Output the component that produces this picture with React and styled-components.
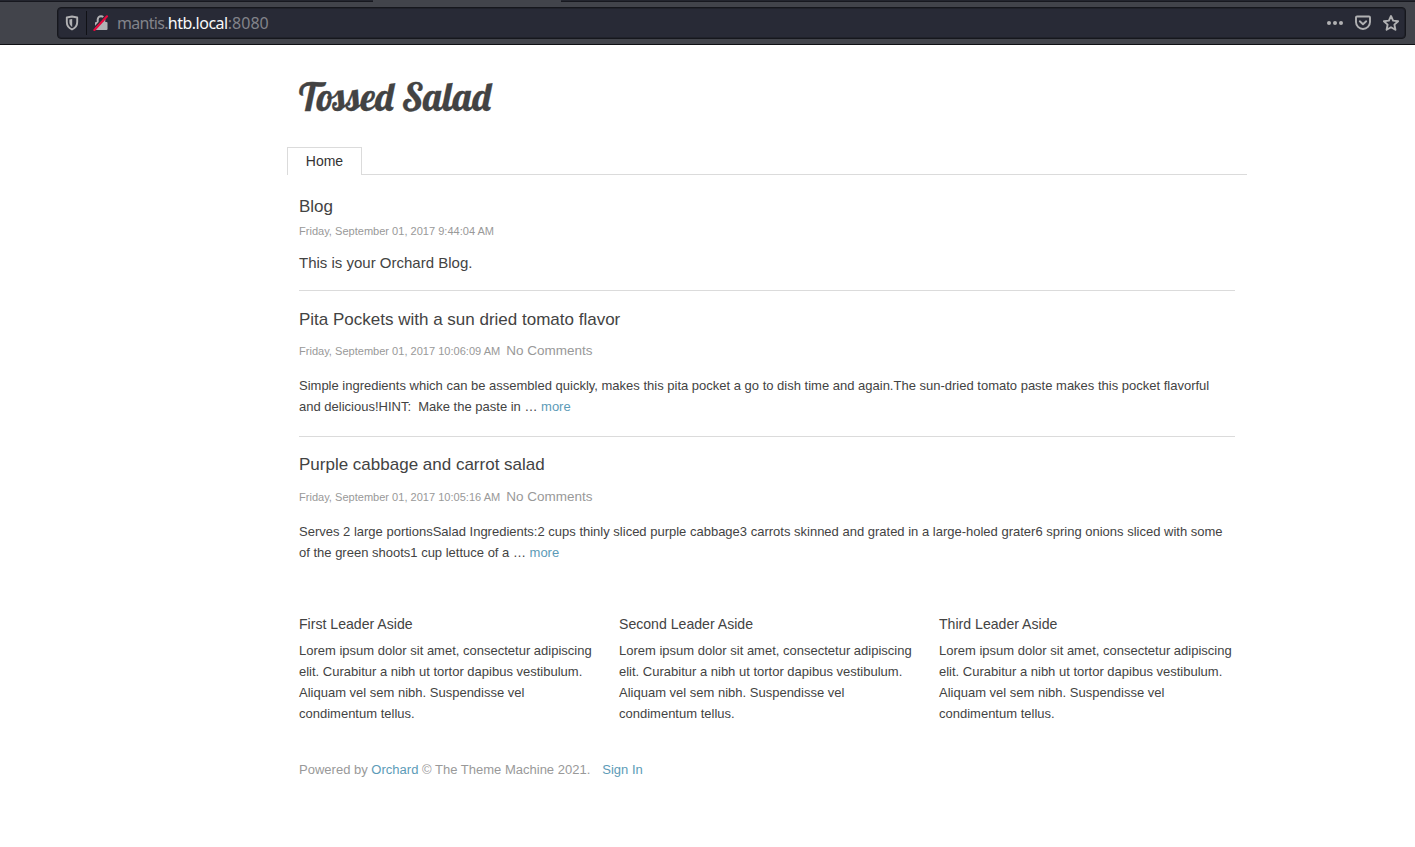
import React from "react";
import styled, { createGlobalStyle } from "styled-components";

const GlobalStyle = createGlobalStyle`
  body {
    margin: 0;
    background: #fff;
    color: #434343;
    font: 13px/21px "Liberation Sans", Arial, sans-serif;
  }
  * { box-sizing: border-box; }
  h1, h2, h3, p { margin: 0; font-weight: normal; }
  a { color: #5c9bb7; text-decoration: none; }
`;

const Chrome = styled.header`
  height: 45px;
  display: flex;
  flex-direction: column;
  background: #42444b;
  border-bottom: 1px solid #0f1014;
`;

const TabStrip = styled.div`
  height: 2px;
  display: flex;
  justify-content: space-between;
`;

const InactiveTabs = styled.div`
  width: ${(p) => p.$width}px;
  background: #23252e;
  border-bottom: 1px solid #17181f;
`;

const AddressBar = styled.div`
  height: 32px;
  margin: 5px 9px 0 57px;
  padding: 0 6px 0 7px;
  display: flex;
  align-items: center;
  background: #282a36;
  border: 1px solid #16171d;
  border-radius: 4px;
  box-shadow: inset 0 0 0 1px #20222b;
  color: #b1b1b3;
  svg { display: block; flex: none; }
`;

const Divider = styled.span`
  width: 1px;
  height: 24px;
  margin: 0 6px 0 7px;
  background: #101116;
`;

const Url = styled.span`
  flex: 1;
  margin-left: 8px;
  font: 16px/22px "Noto Sans", sans-serif;
  letter-spacing: -0.7px;
  color: #82838a;
  b { font-weight: normal; letter-spacing: -0.5px; color: #f9f9fa; }
`;

const Port = styled.span`
  letter-spacing: 0.05px;
`;

const Actions = styled.div`
  display: flex;
  gap: 12px;
`;

const Page = styled.main`
  width: 960px;
  margin-left: 287px;
`;

const SiteTitle = styled.h1`
  margin: 27px 0 0 12px;
  font: normal 39px/50px "Lobster", "Liberation Serif", serif;
  -webkit-text-stroke: 0.3px #434343;
  color: #434343;
  transform: scaleX(0.966);
  transform-origin: left;
`;

const Nav = styled.nav`
  display: flex;
  margin-top: 25px;
  height: 28px;
`;

const NavTab = styled.span`
  width: 75px;
  border: 1px solid #dbdbdb;
  border-bottom: 0;
  text-align: center;
  font-size: 14px;
  line-height: 27px;
  color: #333;
`;

const NavRule = styled.span`
  flex: 1;
  border-bottom: 1px solid #dbdbdb;
`;

const Content = styled.div`
  padding: 0 12px;
`;

const BlogIntro = styled.section`
  padding: 20px 0 16px;
  border-bottom: 1px solid #dbdbdb;
`;

const Heading = styled.h2`
  font-size: 17px;
  line-height: 24px;
`;

const Stamp = styled.span`
  font-size: 11.05px;
  color: #999;
`;

const IntroStamp = styled.p`
  margin-top: 2px;
  line-height: 20px;
`;

const IntroText = styled.p`
  margin-top: 11px;
  font-size: 15px;
  line-height: 22px;
`;

const Post = styled.article`
  height: 146px;
  padding-top: ${(p) => (p.$last ? 16 : 17)}px;
  border-bottom: ${(p) => (p.$last ? "0" : "1px solid #dbdbdb")};
`;

const PostMeta = styled.div`
  display: flex;
  align-items: baseline;
  gap: 6px;
  margin: ${(p) => (p.$last ? 9 : 8)}px 0 13px;
  line-height: 22px;
  color: #999;
`;

const CommentCount = styled.span`
  font-size: 13.5px;
`;

const Asides = styled.div`
  display: grid;
  grid-template-columns: repeat(3, 296px);
  column-gap: 24px;
  margin-top: 30px;
`;

const AsideTitle = styled.h3`
  font-size: 14.1px;
  line-height: 22px;
  margin-bottom: 5px;
`;

const Footer = styled.footer`
  display: flex;
  gap: 12px;
  margin-top: 35px;
  font-size: 13.03px;
  color: #999;
`;

const posts = [
  {
    title: "Pita Pockets with a sun dried tomato flavor",
    date: "Friday, September 01, 2017 10:06:09 AM",
    lines: [
      "Simple ingredients which can be assembled quickly, makes this pita pocket a go to dish time and again.The sun-dried tomato paste makes this pocket flavorful",
      "and delicious!HINT: \u00a0Make the paste in … ",
    ],
  },
  {
    title: "Purple cabbage and carrot salad",
    date: "Friday, September 01, 2017 10:05:16 AM",
    lines: [
      "Serves 2 large portionsSalad Ingredients:2 cups thinly sliced purple cabbage3 carrots skinned and grated in a large-holed grater6 spring onions sliced with some",
      "of the green shoots1 cup lettuce of a … ",
    ],
  },
];

const ShieldIcon = () => (
  <svg width="14" height="16" viewBox="0 0 14 16" fill="none">
    <path d="M7 1.500 12.200 2.500V7c0 3.200-1.800 5.900-5.200 7.500C3.600 12.900 1.800 10.200 1.800 7V2.500Z" stroke="currentColor" strokeWidth="1.9" strokeLinejoin="round" />
    <path d="M7.200 4v8C5.300 10.700 4.400 9 4.400 7V4.600Z" fill="currentColor" />
  </svg>
);

const InsecureIcon = () => (
  <svg width="16" height="16" viewBox="0 0 16 16" fill="none">
    <path d="M4.700 8V4.500a3.300 3.300 0 0 1 6.600 0v3" stroke="currentColor" strokeWidth="2" />
    <rect x="2" y="7" width="12.500" height="8" rx="1" fill="currentColor" />
    <path d="M0 14.300 13.200 .1" stroke="#282a36" strokeWidth="1.600" />
    <path d="M1.400 14.900 14 1.300" stroke="#e6083c" strokeWidth="2.200" strokeLinecap="round" />
  </svg>
);

const MoreIcon = () => (
  <svg width="16" height="16" viewBox="0 0 16 16" fill="currentColor">
    <circle cx="2" cy="8" r="2" />
    <circle cx="8" cy="8" r="2" />
    <circle cx="14" cy="8" r="2" />
  </svg>
);

const PocketIcon = () => (
  <svg width="16" height="16" viewBox="0 0 16 16" fill="none" stroke="currentColor" strokeWidth="1.9" strokeLinecap="round" strokeLinejoin="round">
    <path d="M2 1.500h12a1 1 0 0 1 1 1V7A7 7 0 0 1 1 7V2.500a1 1 0 0 1 1-1Z" />
    <path d="m4.800 6.300 3.200 3 3.200-3" />
  </svg>
);

const StarIcon = () => (
  <svg width="16" height="16" viewBox="0 0 16 16" fill="none" stroke="currentColor" strokeWidth="1.9" strokeLinejoin="round">
    <path d="m8 1 2.100 4.600 5 .6-3.700 3.400 1 5.200L8 12.200l-4.400 2.600 1-5.200L.9 6.200l5-.6Z" />
  </svg>
);

export default function App() {
  return (
    <>
      <GlobalStyle />
      <Chrome>
        <TabStrip>
          <InactiveTabs $width={373} />
          <InactiveTabs $width={854} />
        </TabStrip>
        <AddressBar>
          <ShieldIcon />
          <Divider />
          <InsecureIcon />
          <Url>mantis.<b>htb.local</b><Port>:8080</Port></Url>
          <Actions>
            <MoreIcon />
            <PocketIcon />
            <StarIcon />
          </Actions>
        </AddressBar>
      </Chrome>
      <Page>
        <SiteTitle>Tossed Salad</SiteTitle>
        <Nav>
          <NavTab>Home</NavTab>
          <NavRule />
        </Nav>
        <Content>
          <BlogIntro>
            <Heading>Blog</Heading>
            <IntroStamp><Stamp>Friday, September 01, 2017 9:44:04 AM</Stamp></IntroStamp>
            <IntroText>This is your Orchard Blog.</IntroText>
          </BlogIntro>
          {posts.map((post, i) => (
            <Post key={post.title} $last={i === 1}>
              <Heading>{post.title}</Heading>
              <PostMeta $last={i === 1}>
                <Stamp>{post.date}</Stamp>
                <CommentCount>No Comments</CommentCount>
              </PostMeta>
              <p>
                {post.lines[0]}<br />
                {post.lines[1]}<a>more</a>
              </p>
            </Post>
          ))}
          <Asides>
            {["First", "Second", "Third"].map((name) => (
              <section key={name}>
                <AsideTitle>{name} Leader Aside</AsideTitle>
                <p>
                  Lorem ipsum dolor sit amet, consectetur adipiscing elit. Curabitur a nibh ut tortor dapibus vestibulum. Aliquam vel sem nibh. Suspendisse vel condimentum tellus.
                </p>
              </section>
            ))}
          </Asides>
          <Footer>
            <span>Powered by <a>Orchard</a> © The Theme Machine 2021.</span>
            <a>Sign In</a>
          </Footer>
        </Content>
      </Page>
    </>
  );
}
